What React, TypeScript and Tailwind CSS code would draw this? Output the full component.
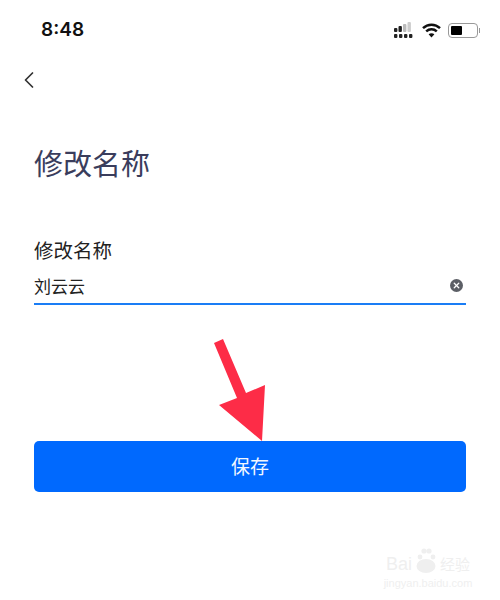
import { ChevronLeft, X } from 'lucide-react'

const cjk = "font-['Noto_Sans_CJK_SC','Noto_Sans',sans-serif]"

function StatusIcons() {
  return (
    <div className="flex items-center gap-[7px]">
      {/* signal */}
      <svg width="21" height="17" viewBox="0 0 21 17">
        <rect x="0" y="6" width="3.4" height="4" rx="1" fill="#222" />
        <rect x="4.5" y="4" width="3.4" height="6" rx="1" fill="#222" />
        <rect x="9" y="2" width="3.4" height="8" rx="1" fill="#bbb" />
        <rect x="13.5" y="0" width="3.4" height="10" rx="1" fill="#ccc" />
        <rect x="0" y="12" width="3.4" height="4" rx="1" fill="#222" />
        <rect x="5" y="12" width="3.4" height="4" rx="1" fill="#222" />
        <rect x="10" y="12" width="3.4" height="4" rx="1" fill="#222" />
        <rect x="15" y="12" width="3.4" height="4" rx="1" fill="#222" />
      </svg>
      <svg width="19" height="15" viewBox="0 0 19 15" fill="none" stroke="#111" strokeWidth="2.5">
        <path d="M1 5.2C5.8 0.6 13.2 0.6 18 5.2" />
        <path d="M4.2 8.4C7.2 5.6 11.8 5.6 14.8 8.4" />
        <path d="M9.5 14.5L6.6 11.2C8.4 9.9 10.6 9.9 12.4 11.2Z" fill="#111" stroke="none" />
      </svg>
      <div className="flex items-center gap-[1px]">
        <div className="flex h-[15px] w-[30px] items-center rounded-[4px] border border-[#999] p-[2px]">
          <div className="h-full w-[11px] rounded-[1px] bg-black" />
        </div>
        <div className="h-[5px] w-[1px] bg-[#999]" />
      </div>
    </div>
  )
}

export default function App() {
  return (
    <div className={`relative h-[600px] w-[500px] overflow-hidden bg-white ${cjk}`}>
      <div className="flex h-[60px] items-center justify-between pl-[41px] pr-[20px]">
        <span className="font-['Inter',sans-serif] text-[19px] font-semibold text-[#111]">8:48</span>
        <StatusIcons />
      </div>

      <div className="flex h-[40px] items-center pl-[15px]">
        <ChevronLeft className="h-[28px] w-[28px] text-[#333]" strokeWidth={1.5} />
      </div>

      <div className="px-[34px]">
        <h1 className="mt-[39px] text-[29px] leading-[46px] font-normal text-[#3a3d5c]">修改名称</h1>

        <label className="mt-[50px] block text-[19.5px] leading-[30px] text-[#222]">修改名称</label>

        <div className="mt-[2px] flex h-[38px] items-center justify-between border-b-2 border-[#1a7df5] pr-[3px]">
          <span className="pt-[2px] text-[17px] text-[#222]">刘云云</span>
          <span className="flex h-[13px] w-[13px] items-center justify-center rounded-full bg-[#5c5f66]">
            <X className="h-[9px] w-[9px] text-white" strokeWidth={3.5} />
          </span>
        </div>

        <button className="mt-[136px] block h-[51px] w-full rounded-[5px] bg-[#0069fe] text-[19px] text-[#f2f7ff]">
          保存
        </button>
      </div>

      {/* red annotation arrow */}
      <svg className="absolute top-0 left-0" width="500" height="600" viewBox="0 0 500 600">
        <polygon
          points="214,343 223,339 246,393 265,385 262,441 219,405 237,398"
          fill="#fd2c47"
        />
      </svg>

      {/* watermark */}
      <div className="absolute top-[547px] left-[383px] flex w-[90px] flex-col items-center text-[#efefef]">
        <div className="flex h-[27px] items-end gap-[2px] font-['Liberation_Sans',sans-serif] text-[18px] leading-[20px]">
          <span>Bai</span>
          <svg className="mx-[2px]" width="20" height="27" viewBox="0 0 20 27" fill="#efefef">
            <circle cx="4" cy="10" r="2.4" />
            <circle cx="8" cy="4" r="2.6" />
            <circle cx="13" cy="4" r="2.6" />
            <circle cx="17" cy="10" r="2.4" />
            <ellipse cx="10" cy="19" rx="9.5" ry="7" />
          </svg>
          <span className={`${cjk} text-[15px]`}>经验</span>
        </div>
        <span className="mt-[3px] font-['Liberation_Sans',sans-serif] text-[11px] leading-[12px]">jingyan.baidu.com</span>
      </div>
    </div>
  )
}
